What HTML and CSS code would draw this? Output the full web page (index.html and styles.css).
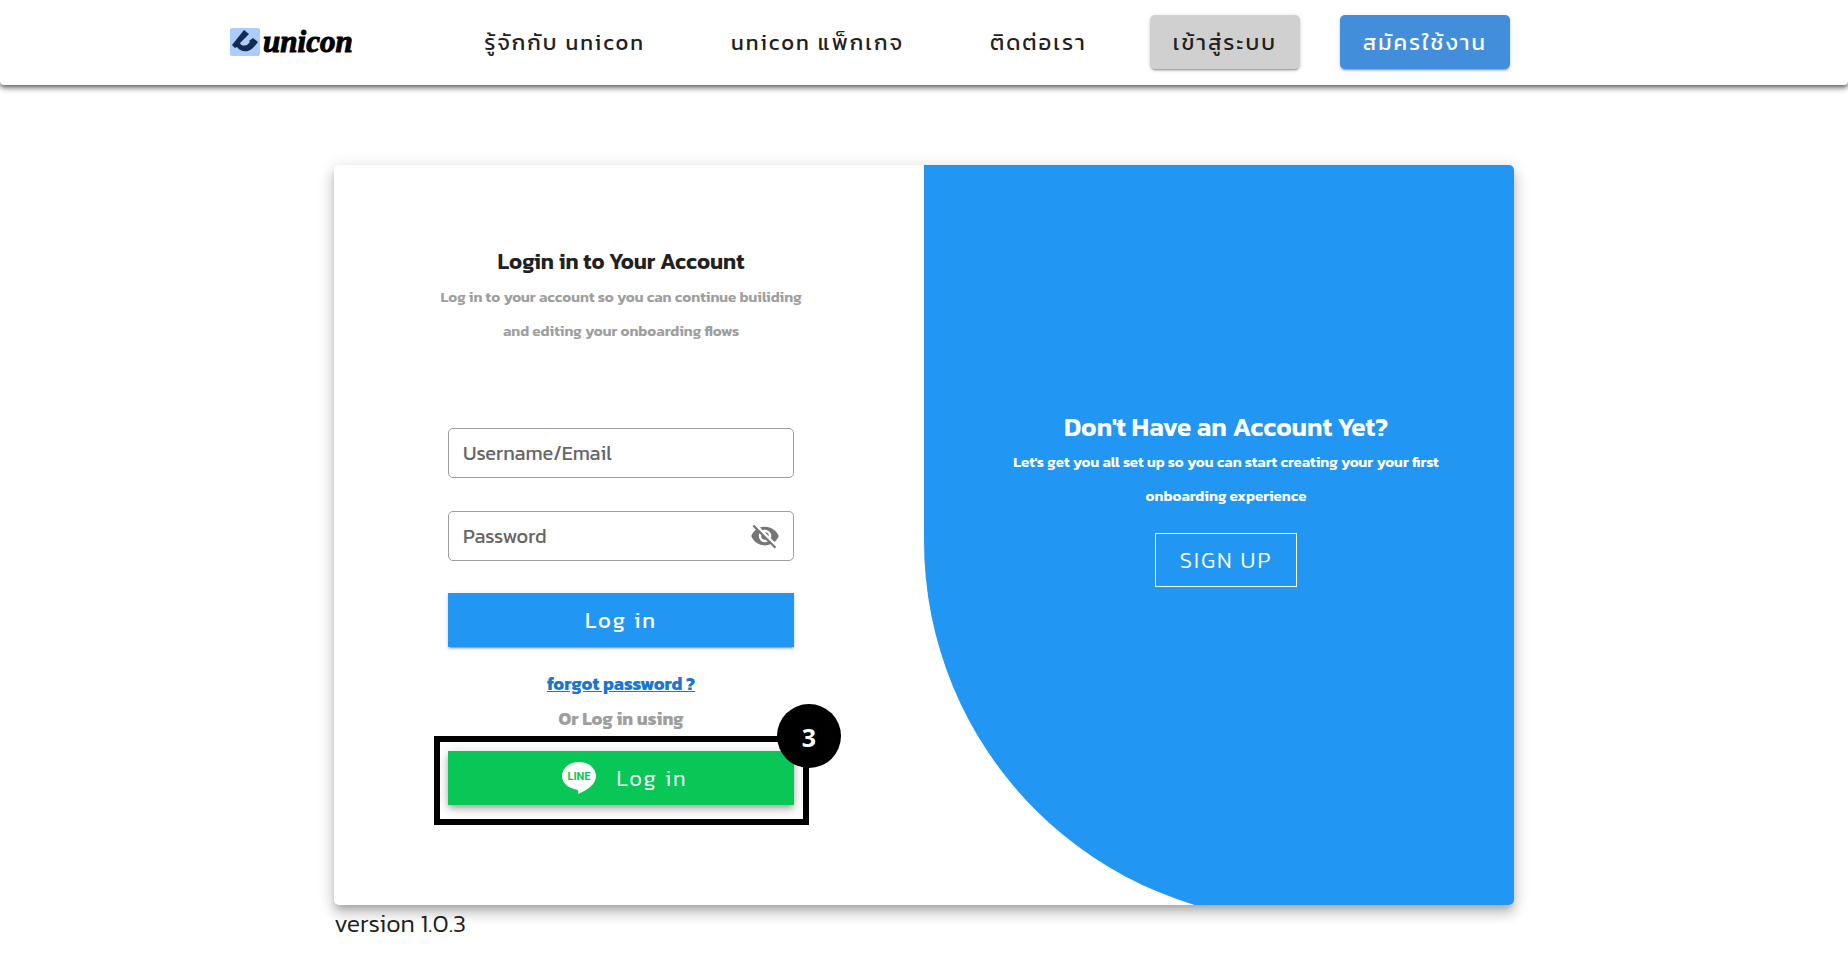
FILE: index.html
```html
<!DOCTYPE html>
<html lang="th">
<head>
<meta charset="utf-8">
<meta name="viewport" content="width=device-width, initial-scale=1">
<title>unicon</title>
<link rel="stylesheet" href="styles.css">
</head>
<body>
<header class="topbar">
  <a class="brand" href="#">
    <svg class="brand-mark" viewBox="0 0 30 28" aria-hidden="true">
      <rect width="30" height="28" rx="2" fill="#aaccff"/>
      <path d="M2 17L14 2L19 6L10 15C11 18 14 18 17 17L20 14L19 13L23 10L28 14C25 18 22 22 18 23C13 24 9 22 7 19L5 20Z" fill="#152a50"/>
    </svg>
    <span class="brand-name">unicon</span>
  </a>
  <nav class="menu">
    <a class="btn" href="#">รู้จักกับ unicon</a>
    <a class="btn" href="#">unicon แพ็กเกจ</a>
    <a class="btn" href="#">ติดต่อเรา</a>
    <button class="btn btn-grey" type="button">เข้าสู่ระบบ</button>
    <button class="btn btn-blue" type="button">สมัครใช้งาน</button>
  </nav>
</header>
<main class="page">
  <div class="card">
    <section class="login">
      <h1 class="title">Login in to Your Account</h1>
      <p class="lead">Log in to your account so you can continue builiding<br>and editing your onboarding flows</p>
      <form class="form">
        <div class="field">
          <input class="input" id="user" type="text">
          <label class="field-label" for="user">Username/Email</label>
        </div>
        <div class="field">
          <input class="input" id="pw" type="password">
          <label class="field-label" for="pw">Password</label>
          <button class="eye" type="button" aria-label="Show password">
            <svg viewBox="0 0 24 24" width="30" height="30"><path fill="#757575" d="M11.83,9L15,12.16C15,12.11 15,12.05 15,12A3,3 0 0,0 12,9C11.94,9 11.89,9 11.83,9M7.53,9.8L9.08,11.35C9.03,11.56 9,11.77 9,12A3,3 0 0,0 12,15C12.22,15 12.44,14.97 12.65,14.92L14.2,16.47C13.53,16.8 12.79,17 12,17A5,5 0 0,1 7,12C7,11.21 7.2,10.47 7.53,9.8M2,4.27L4.28,6.55L4.73,7C3.08,8.3 1.78,10 1,12C2.73,16.39 7,19.5 12,19.5C13.55,19.5 15.03,19.2 16.38,18.66L16.81,19.08L19.73,22L21,20.73L3.27,3M12,7A5,5 0 0,1 17,12C17,12.64 16.87,13.26 16.64,13.82L19.57,16.75C21.07,15.5 22.27,13.86 23,12C21.27,7.61 17,4.5 12,4.5C10.6,4.5 9.26,4.75 8,5.2L10.17,7.35C10.74,7.13 11.35,7 12,7Z"/></svg>
          </button>
        </div>
        <button class="btn btn-login" type="submit">Log in</button>
        <a class="forgot" href="#">forgot password ?</a>
        <p class="or">Or Log in using</p>
        <div class="line-wrap">
          <button class="btn btn-line" type="button">
            <svg width="36" height="34" viewBox="0 0 36 34" aria-hidden="true">
              <path fill="#fff" d="M18 1C8.500 1 1 7.200 1 15C1 22 7.500 27.600 16 28.700C17.500 29 17.500 30 17 33C22 31 35 25 35 15C35 7.200 27.500 1 18 1Z"/>
              <text class="line-text" x="18" y="19" text-anchor="middle">LINE</text>
            </svg>
            <span>Log in</span>
          </button>
          <span class="outline"></span>
          <span class="badge">3</span>
        </div>
      </form>
    </section>
    <section class="signup">
      <h2 class="title title-lg">Don't Have an Account Yet?</h2>
      <p class="lead lead-white">Let's get you all set up so you can start creating your your first<br>onboarding experience</p>
      <button class="btn btn-outline" type="button">SIGN UP</button>
    </section>
  </div>
  <p class="version">version 1.0.3</p>
</main>
</body>
</html>
```
FILE: styles.css
```css
* { box-sizing: border-box; }
body {
  margin: 0;
  background: #fff;
  color: #212121;
  font-family: Kanit, "Noto Sans", "Noto Sans Thai", sans-serif;
}
h1, h2, p { margin: 0; }
.topbar {
  display: flex;
  align-items: center;
  justify-content: space-between;
  height: 85px;
  padding: 0 18.3% 1px 12.45%;
  border-radius: 0 0 4px 4px;
  box-shadow: 0 2px 4px -1px rgba(0,0,0,.5), 0 4px 5px rgba(0,0,0,.24), 0 1px 10px rgba(0,0,0,.2);
}
.brand { display: flex; align-items: center; gap: 3px; color: #000; text-decoration: none; }
.brand-mark { width: 30px; height: 28px; }
.brand-name {
  font: italic bold 31px/28px "Liberation Serif", serif;
  -webkit-text-stroke: 1px #000;
}
.menu { display: flex; gap: 40px; }
.btn {
  display: flex;
  align-items: center;
  justify-content: center;
  height: 54px;
  padding: 0 23px;
  border: 0;
  border-radius: 5px;
  background: none;
  color: #212121;
  font-family: inherit;
  font-size: 22px;
  font-weight: 400;
  letter-spacing: 2px;
  text-decoration: none;
  white-space: nowrap;
  cursor: pointer;
}
.btn-grey, .btn-blue, .btn-login {
  box-shadow: 0 3px 1px -2px rgba(0,0,0,.2), 0 2px 2px rgba(0,0,0,.14), 0 1px 5px rgba(0,0,0,.12);
}
.btn-grey { background: #d0d0d0; }
.btn-blue { background: #428eda; color: #fff; }
.page { max-width: 1180px; margin: 80px auto 0; }
.card {
  display: grid;
  grid-template-columns: 1fr 1fr;
  min-height: 740px;
  overflow: hidden;
  border-radius: 5px;
  box-shadow: 0 5px 6px -3px rgba(0,0,0,.2), 0 9px 12px 1px rgba(0,0,0,.14), 0 3px 16px 2px rgba(0,0,0,.12);
}
.login {
  display: flex;
  flex-direction: column;
  align-items: center;
  padding: 80px 16px 0 0;
}
.title { font-size: 22px; line-height: 34px; font-weight: 600; }
.title-lg { font-size: 26px; }
.lead {
  margin-top: 1px;
  color: #9e9e9e;
  font-size: 15px;
  line-height: 34px;
  font-weight: 600;
  text-align: center;
}
.lead-white { color: #fff; }
.form {
  display: flex;
  flex-direction: column;
  width: 346px;
  margin-top: 80px;
}
.field { position: relative; margin-bottom: 33px; }
.field + .field { margin-bottom: 32px; }
.input {
  display: block;
  width: 100%;
  height: 50px;
  padding: 0 14px;
  border: 1px solid #9e9e9e;
  border-radius: 5px;
  font-family: inherit;
  font-size: 20px;
  color: #212121;
}
.field-label {
  position: absolute;
  top: 0;
  left: 15px;
  color: #666;
  font-size: 20px;
  line-height: 50px;
}
.eye {
  position: absolute;
  top: 10px;
  right: 14px;
  display: flex;
  padding: 0;
  border: 0;
  background: none;
}
.btn-login { background: #2196f3; color: #fff; border-radius: 0; }
.forgot {
  align-self: center;
  margin-top: 20px;
  color: #1976d2;
  font-size: 18px;
  line-height: 34px;
  font-weight: 700;
}
.or {
  color: #9e9e9e;
  font-size: 18px;
  line-height: 36px;
  font-weight: 700;
  text-align: center;
}
.line-wrap { position: relative; margin-top: 14px; }
.btn-line {
  width: 100%;
  gap: 19px;
  padding-left: 30px;
  border-radius: 0;
  background: #08c757;
  color: #fff;
  font-weight: 300;
  box-shadow: 0 3px 5px -1px rgba(0,0,0,.2), 0 5px 8px rgba(0,0,0,.14), 0 1px 14px rgba(0,0,0,.12);
}
.line-text { fill: #08c757; font: bold 11px Roboto, sans-serif; letter-spacing: 0; }
.outline {
  position: absolute;
  inset: -15px -15px -20px -14px;
  border: 6px solid #000;
  pointer-events: none;
}
.badge {
  position: absolute;
  top: -47px;
  right: -47px;
  width: 64px;
  height: 64px;
  border-radius: 50%;
  background: #000;
  color: #fff;
  font: bold 25px/66px "Noto Sans", sans-serif;
  text-align: center;
}
.signup {
  display: flex;
  flex-direction: column;
  align-items: center;
  margin-bottom: -16px;
  padding: 245px 0 0 14px;
  border-bottom-left-radius: 380px;
  background: #2196f3;
  color: #fff;
}
.btn-outline {
  margin-top: 20px;
  padding: 0 24px;
  border: 1px solid #fff;
  border-radius: 0;
  color: #fff;
  font-weight: 300;
}
.version { font-size: 25px; line-height: 36px; font-weight: 300; }
```
